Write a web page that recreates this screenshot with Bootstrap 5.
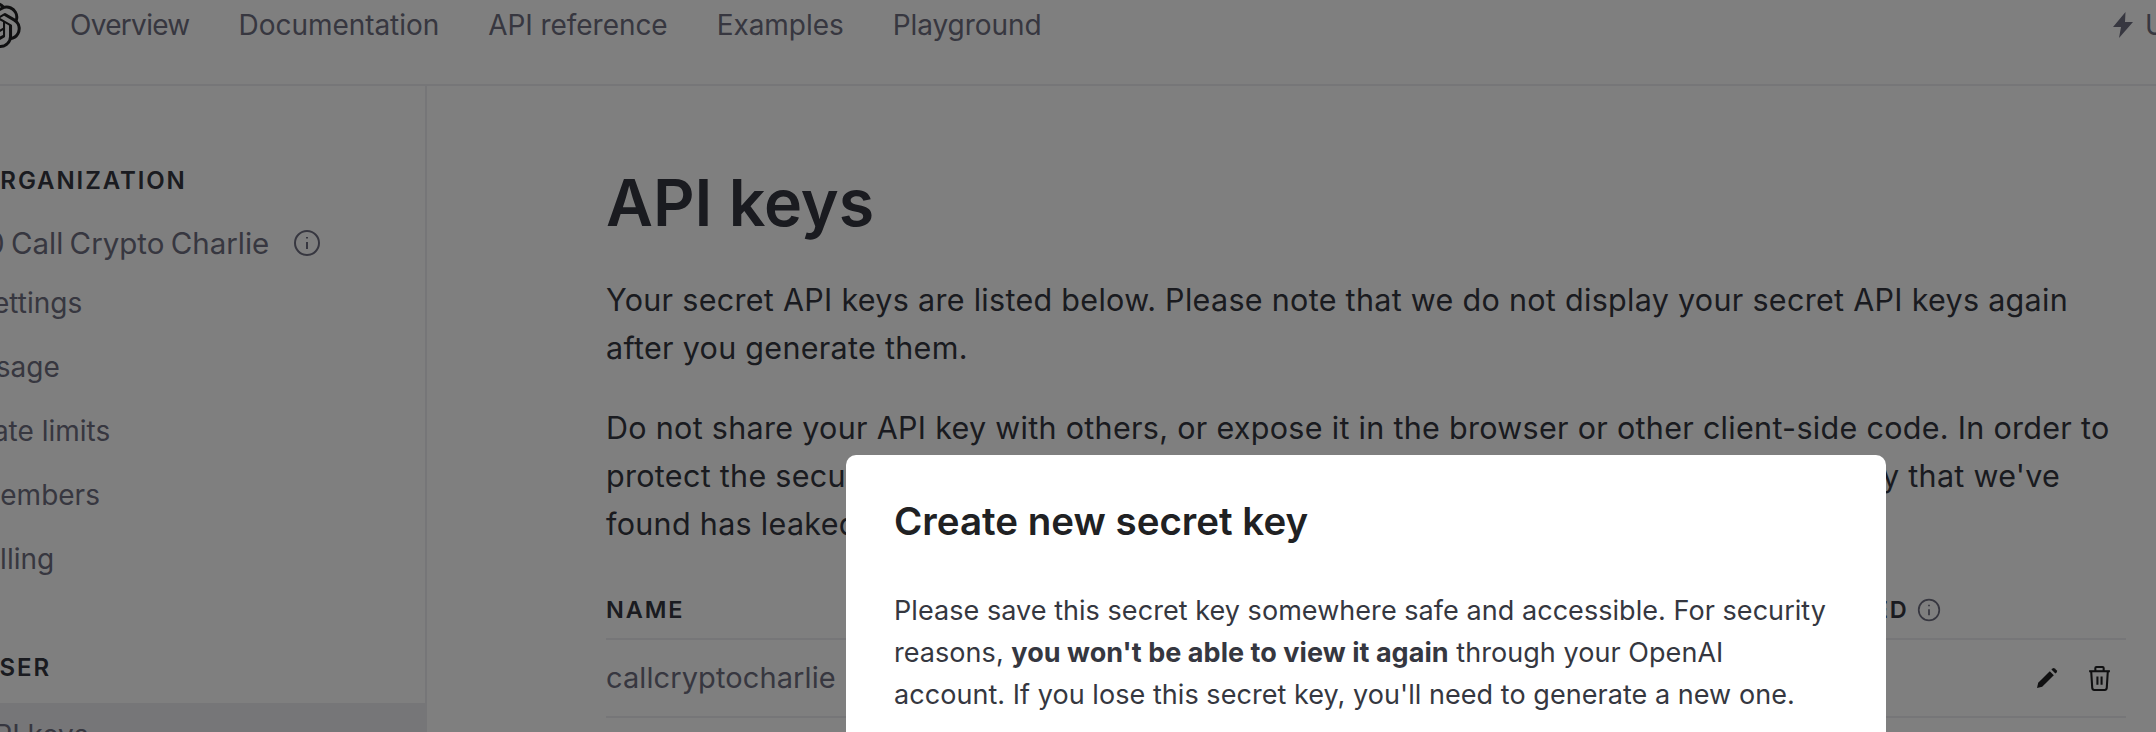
<!DOCTYPE html>
<html lang="en">
<head>
  <meta charset="UTF-8" />
  <meta name="viewport" content="width=device-width, initial-scale=1.0" />
  <title>API keys</title>
  <link href="https://cdn.jsdelivr.net/npm/bootstrap@5.3.3/dist/css/bootstrap.min.css" rel="stylesheet">
  <style>
    body { font-family: Inter, "Liberation Sans", sans-serif; color: #353740; overflow: hidden; background: #fff; }
    .app-frame { width: 2156px; height: 732px; overflow: hidden; }
    .top-bar { height: 86px; border-bottom: 2px solid #ececf1; overflow: hidden; }
    .top-logo { width: 46px; height: 46px; margin: 2px 0 0 -25px; color: #202123; flex-shrink: 0; }
    .top-links { gap: 49px; margin-left: 49px; }
    .top-links a { color: #6e6e80; font-size: 28px; line-height: 50px; text-decoration: none; letter-spacing: -.05px; }
    .top-links a:first-child { letter-spacing: -.7px; }
    .upgrade-link { color: #6e6e80; font-size: 28px; line-height: 50px; gap: 12px; margin-right: -104px; flex-shrink: 0; }
    .side-col { width: 427px; border-right: 2px solid #ececf1; padding-top: 79px; flex-shrink: 0; overflow: hidden; }
    .side-head { font-size: 24px; font-weight: 600; letter-spacing: 1.9px; color: #353740; line-height: 32px; margin-left: -20px; }
    .side-org { font-size: 29.5px; line-height: 40px; color: #6e6e80; margin: 26px 0 0 -26px; gap: 24px; white-space: nowrap; word-spacing: -2px; }
    .side-item { font-size: 28px; line-height: 64px; height: 64px; color: #6e6e80; margin-left: -25px; text-decoration: none; display: block; }
    .side-item-first { margin-top: 8px; }
    .side-head-user { margin-top: 61px; }
    .side-active { background: #ececf1; margin: 19px 0 0 0; padding-left: 0; text-indent: -25px; }
    .main-col { padding: 82px 30px 0 179px; flex: 1; min-width: 0; }
    .page-title { font-size: 64.5px; line-height: 70px; font-weight: 600; color: #353740; margin: 0 0 38px; }
    .page-text { font-size: 30.5px; line-height: 48px; color: #353740; margin: 0 0 32px; letter-spacing: .3px; white-space: nowrap; }
    .keys-table { table-layout: fixed; width: 1520px; margin: 45px 0 0; border-collapse: collapse; }
    .keys-table th { font-size: 23.5px; font-weight: 600; letter-spacing: 1.9px; color: #353740; padding: 0 0 11px; line-height: 34px; border-bottom: 2px solid #ececf1; white-space: nowrap; }
    .keys-table td { font-size: 29px; letter-spacing: .1px; color: #6e6e80; height: 78px; padding: 0; border-bottom: 2px solid #ececf1; vertical-align: middle; }
    .row-icons { gap: 28px; padding-right: 14px; }
    .backdrop-layer { inset: 0; background: rgba(0,0,0,.5); }
    .key-dialog { left: 846px; top: 455px; width: 1040px; height: 420px; border-radius: 10px; padding: 41px 48px; }
    .key-title { font-size: 38.5px; line-height: 50px; font-weight: 600; color: #202123; margin: 0 0 44px; }
    .key-text { font-size: 27px; line-height: 42px; color: #353740; margin: 0; letter-spacing: .05px; white-space: nowrap; }
  </style>
</head>
<body>
  <div class="app-frame position-relative">
    <header class="top-bar d-flex align-items-start">
      <svg class="top-logo" viewBox="0 0 24 24" fill="currentColor"><path d="M22.2819 9.8211a5.9847 5.9847 0 0 0-.5157-4.9108 6.0462 6.0462 0 0 0-6.5098-2.9A6.0651 6.0651 0 0 0 4.9807 4.1818a5.9847 5.9847 0 0 0-3.9977 2.9 6.0462 6.0462 0 0 0 .7427 7.0966 5.98 5.98 0 0 0 .511 4.9107 6.051 6.051 0 0 0 6.5146 2.9001A5.9847 5.9847 0 0 0 13.2599 24a6.0557 6.0557 0 0 0 5.7718-4.2058 5.9894 5.9894 0 0 0 3.9977-2.9001 6.0557 6.0557 0 0 0-.7475-7.0729zm-9.022 12.6081a4.4755 4.4755 0 0 1-2.8764-1.0408l.1419-.0804 4.7783-2.7582a.7948.7948 0 0 0 .3927-.6813v-6.7369l2.02 1.1686a.071.071 0 0 1 .038.052v5.5826a4.504 4.504 0 0 1-4.4945 4.4944zm-9.6607-4.1254a4.4708 4.4708 0 0 1-.5346-3.0137l.142.0852 4.783 2.7582a.7712.7712 0 0 0 .7806 0l5.8428-3.3685v2.3324a.0804.0804 0 0 1-.0332.0615L9.74 19.9502a4.4992 4.4992 0 0 1-6.1408-1.6464zM2.3408 7.8956a4.485 4.485 0 0 1 2.3655-1.9728V11.6a.7664.7664 0 0 0 .3879.6765l5.8144 3.3543-2.0201 1.1685a.0757.0757 0 0 1-.071 0l-4.8303-2.7865A4.504 4.504 0 0 1 2.3408 7.872zm16.5963 3.8558L13.1038 8.364 15.1192 7.2a.0757.0757 0 0 1 .071 0l4.8303 2.7913a4.4944 4.4944 0 0 1-.6765 8.1042v-5.6772a.79.79 0 0 0-.407-.667zm2.0107-3.0231l-.142-.0852-4.7735-2.7818a.7759.7759 0 0 0-.7854 0L9.409 9.2297V6.8974a.0662.0662 0 0 1 .0284-.0615l4.8303-2.7866a4.4992 4.4992 0 0 1 6.6802 4.66zM8.3065 12.863l-2.02-1.1638a.0804.0804 0 0 1-.038-.0567V6.0742a4.4992 4.4992 0 0 1 7.3757-3.4537l-.142.0805L8.704 5.459a.7948.7948 0 0 0-.3927.6813zm1.0976-2.3654l2.602-1.4998 2.6069 1.4998v2.9994l-2.5974 1.5-2.6067-1.5Z"/></svg>
      <nav class="top-links d-flex">
        <a href="#">Overview</a>
        <a href="#">Documentation</a>
        <a href="#">API reference</a>
        <a href="#">Examples</a>
        <a href="#">Playground</a>
      </nav>
      <div class="upgrade-link d-flex align-items-center ms-auto">
        <svg width="20" height="26" viewBox="0 0 20 26" fill="#6e6e80"><path d="M12.5 0 0 15h8L6 26l14-16h-8z"/></svg>
        <span>Upgrade</span>
      </div>
    </header>

    <div class="d-flex">
      <aside class="side-col">
        <div class="side-head">ORGANIZATION</div>
        <div class="side-org d-flex align-items-center">
          <span>10 Call Crypto Charlie</span>
          <svg width="28" height="28" viewBox="0 0 28 28" fill="none" stroke="#6e6e80" stroke-width="2"><circle cx="14" cy="14" r="12"/><path d="M14 13v7"/><path d="M14 8v1.6"/></svg>
        </div>
        <a class="side-item side-item-first" href="#">Settings</a>
        <a class="side-item" href="#">Usage</a>
        <a class="side-item" href="#">Rate limits</a>
        <a class="side-item" href="#">Members</a>
        <a class="side-item" href="#">Billing</a>
        <div class="side-head side-head-user">USER</div>
        <a class="side-item side-active" href="#">API keys</a>
      </aside>

      <main class="main-col">
        <h1 class="page-title">API keys</h1>
        <p class="page-text">Your secret API keys are listed below. Please note that we do not display your secret API keys again<br>after you generate them.</p>
        <p class="page-text">Do not share your API key with others, or expose it in the browser or other client-side code. In order to<br>protect the security of your account, OpenAI may also automatically disable any API key that we've<br>found has leaked publicly.</p>
        <table class="keys-table">
          <colgroup><col style="width: 470px"><col style="width: 350px"><col style="width: 335px"><col style="width: 221px"><col style="width: 144px"></colgroup>
          <thead>
            <tr>
              <th>NAME</th>
              <th>SECRET KEY</th>
              <th>CREATED</th>
              <th>
                <span class="d-inline-flex align-items-center gap-2">LAST USED
                  <svg width="24" height="24" viewBox="0 0 28 28" fill="none" stroke="#6e6e80" stroke-width="2"><circle cx="14" cy="14" r="12"/><path d="M14 13v7"/><path d="M14 8v1.6"/></svg>
                </span>
              </th>
              <th></th>
            </tr>
          </thead>
          <tbody>
            <tr>
              <td>callcryptocharlie</td>
              <td></td>
              <td></td>
              <td></td>
              <td>
                <div class="row-icons d-flex justify-content-end align-items-center">
                  <svg width="24" height="24" viewBox="0 0 24 24" fill="#202123"><path d="M2 22l1.2-5.2L14.8 5.2l4 4L7.2 20.8z"/><path d="M16.4 3.6l1.2-1.2a1.5 1.5 0 0 1 2.1 0l1.9 1.9a1.5 1.5 0 0 1 0 2.1l-1.2 1.2z"/></svg>
                  <svg width="25" height="27" viewBox="0 0 24 26" fill="none" stroke="#202123" stroke-width="2" stroke-linejoin="round"><path d="M2 6h20"/><path d="M8 6V3a1 1 0 0 1 1-1h6a1 1 0 0 1 1 1v3"/><path d="M4 6l1 16a2 2 0 0 0 2 2h10a2 2 0 0 0 2-2l1-16"/><path d="M10 11v8M14 11v8"/></svg>
                </div>
              </td>
            </tr>
          </tbody>
        </table>
      </main>
    </div>

    <div class="backdrop-layer position-absolute"></div>
    <div class="key-dialog position-absolute bg-white">
      <h2 class="key-title">Create new secret key</h2>
      <p class="key-text">Please save this secret key somewhere safe and accessible. For security<br>reasons, <strong>you won't be able to view it again</strong> through your OpenAI<br>account. If you lose this secret key, you'll need to generate a new one.</p>
    </div>
  </div>
  <script src="https://cdn.jsdelivr.net/npm/bootstrap@5.3.3/dist/js/bootstrap.bundle.min.js"></script>
</body>
</html>
